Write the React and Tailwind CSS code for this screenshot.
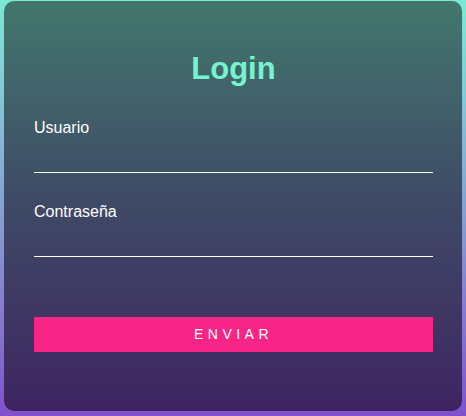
import React from 'react';

const Field = ({ label, type, className }) => (
  <div className={className}>
    <label className="block text-[16px] leading-6 text-white">{label}</label>
    <input
      type={type}
      className="block h-[33px] w-full border-b border-white bg-transparent text-white outline-none"
    />
  </div>
);

export default function App() {
  return (
    <div
      className="w-[466px] h-[416px] bg-gradient-to-b from-[#7ae9d5] to-[#8150cc] pt-px px-1 pb-[5px]"
      style={{ fontFamily: '"Liberation Sans", Arial, sans-serif' }}
    >
      <form className="h-[410px] rounded-[10px] bg-gradient-to-b from-[#42776c] via-[#3e4966] to-[#3e2461] pt-[50px] pl-[30px] pr-[29px]">
        <h1 className="text-center text-[31px] leading-[36px] font-bold text-[#74f4cf]">Login</h1>
        <Field label="Usuario" type="text" className="mt-[29px]" />
        <Field label="Contraseña" type="password" className="mt-[27px]" />
        <button
          type="button"
          className="mt-[60px] block h-[35px] w-full bg-[#f72586] text-[14px] tracking-[4.5px] text-white"
        >
          ENVIAR
        </button>
      </form>
    </div>
  );
}
